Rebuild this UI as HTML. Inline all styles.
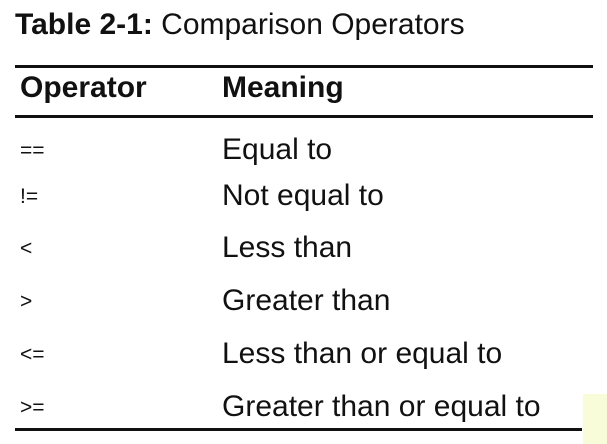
<!DOCTYPE html>
<html><head><style>
body{margin:0;width:607px;height:444px;background:#fff;position:relative;overflow:hidden;font-family:"Liberation Sans",sans-serif;color:#111}
.t{position:absolute;white-space:nowrap;line-height:1}
.m{font-size:30px;left:222px}
.o{font-size:21px;left:20px}
.rule{position:absolute;left:15px;background:#111}
</style></head><body>
<div class="t" style="left:15px;top:10px;font-size:30px"><b>Table 2-1:</b> Comparison Operators</div>
<div class="rule" style="top:65px;width:578px;height:3px"></div>
<div class="t" style="left:20px;top:73px;font-size:30px;font-weight:bold">Operator</div>
<div class="t" style="left:222px;top:73px;font-size:30px;font-weight:bold">Meaning</div>
<div class="rule" style="top:115px;width:578px;height:3px"></div>
<div class="t o" style="top:140px">==</div>
<div class="t m" style="top:135px">Equal to</div>
<div class="t o" style="top:186px">!=</div>
<div class="t m" style="top:181px">Not equal to</div>
<div class="t o" style="top:238px">&lt;</div>
<div class="t m" style="top:233px">Less than</div>
<div class="t o" style="top:291px">&gt;</div>
<div class="t m" style="top:286px">Greater than</div>
<div class="t o" style="top:344px">&lt;=</div>
<div class="t m" style="top:339px">Less than or equal to</div>
<div class="t o" style="top:397px">&gt;=</div>
<div class="t m" style="top:392px">Greater than or equal to</div>
<div style="position:absolute;left:583px;top:394px;width:24px;height:50px;background:#f8fcd8"></div>
<div class="rule" style="top:428px;width:567px;height:3px"></div>
</body></html>
